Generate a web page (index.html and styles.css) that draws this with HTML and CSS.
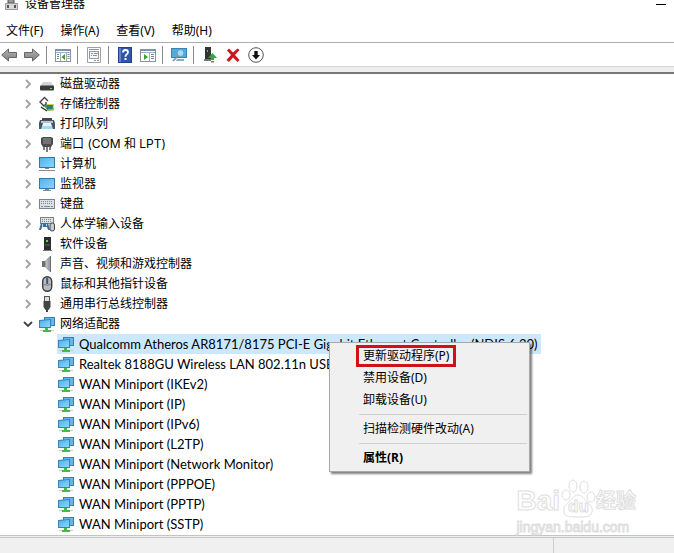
FILE: index.html
```html
<!DOCTYPE html>
<html lang="zh-CN">
<head>
    <meta charset="UTF-8">
    <meta name="viewport" content="width=device-width, initial-scale=1.0">
    <title>设备管理器</title>
    <link rel="stylesheet" href="styles.css">
</head>
<body>
    <!-- Icons -->
    <svg class="symbols" aria-hidden="true">
        <linearGradient id="screenBlue" x1="0" y1="0" x2="1" y2="1">
            <stop offset="0" stop-color="#4fb0ee"/>
            <stop offset="1" stop-color="#8ad8fc"/>
        </linearGradient>
        <linearGradient id="arrowGrey" x1="0" y1="0" x2="0" y2="1">
            <stop offset="0" stop-color="#b5b5b5"/>
            <stop offset="1" stop-color="#7c7c7c"/>
        </linearGradient>
        <symbol id="chevron" viewBox="0 0 10 10">
            <path d="M3 1l4 4-4 4" fill="none" stroke="#a0a0a0" stroke-width="1.8"/>
        </symbol>
        <symbol id="chevronOpen" viewBox="0 0 10 10">
            <path d="M1 3l4 4 4-4" fill="none" stroke="#404040" stroke-width="1.8"/>
        </symbol>
        <symbol id="network" viewBox="0 0 16 16">
            <path d="M5 1h11v9H5z" fill="#3a7fae"/>
            <path d="M6 2h9v7H6z" fill="#63b6ea"/>
            <path d="M0 4l12-1v9H0z" fill="#3a82b6"/>
            <path d="M1 5l10-1v7H1z" fill="url(#screenBlue)"/>
            <path d="M6 12h3v2h3v2H4v-2h2z" fill="#45b84e"/>
            <path d="M1 14h3v1H1zM12 14h3v1h-3z" fill="#c4cfc4"/>
        </symbol>
        <symbol id="disk" viewBox="0 0 16 16">
            <path d="M4 6h8l3 4H1z" fill="#d5d5d5"/>
            <rect x="1" y="9.500" width="14" height="5" rx="1" fill="#3b3b3b"/>
            <rect x="11" y="12" width="2" height="1" fill="#62d672"/>
        </symbol>
        <symbol id="storage" viewBox="0 0 16 16">
            <path d="M9 5L5.500 1.500 1 6l4 4 2-2V6" fill="none" stroke="#444" stroke-width="1.400"/>
            <path d="M5 10l3-2h7v6l-6 1z" fill="#3d9b52"/>
            <path d="M8 9h5v4H8z" fill="#2d7b75"/>
            <path d="M8 8.500h7M9 14h6M14.500 8v5" stroke="#d9cc4a"/>
            <path d="M2 11l6 4" stroke="#333" stroke-width="1.500"/>
        </symbol>
        <symbol id="printer" viewBox="0 0 16 16">
            <rect x="3" y="2" width="10" height="3" fill="#3e4850"/>
            <path d="M1 4h14l1 3v6h-3V9H3v4H0V7z" fill="#4b555e"/>
            <path d="M2 5h12v2H2z" fill="#b9c4cc"/>
            <path d="M4 7h8l2 6H2z" fill="#a5dbf2"/>
            <path d="M4 7h8v3H4z" fill="#e4f5fb"/>
        </symbol>
        <symbol id="port" viewBox="0 0 16 16">
            <path d="M2 2l2-1h8l2 1v6l-2 3H4L2 8z" fill="#4c4c4c"/>
            <path d="M4 3h8M4 5h8M4 7h8" stroke="#9a9a9a"/>
            <path d="M5 11v3M8 11v5M11 11v3" stroke="#555" stroke-width="1.500"/>
        </symbol>
        <symbol id="computer" viewBox="0 0 16 16">
            <rect x="0.500" y="1.500" width="15" height="10" fill="url(#screenBlue)" stroke="#3277a5"/>
            <path d="M6 12h4v1H6z" fill="#789"/>
            <path d="M0 14h16v1H0z" fill="#8c8c8c"/>
        </symbol>
        <symbol id="monitor" viewBox="0 0 16 16">
            <rect x="0.500" y="2.500" width="15" height="10" fill="url(#screenBlue)" stroke="#3277a5"/>
            <path d="M6 13h4v1h2v1H4v-1h2z" fill="#7b8a95"/>
        </symbol>
        <symbol id="keyboard" viewBox="0 0 16 16">
            <rect x="0.500" y="3.500" width="15" height="9" fill="#dbe0e3" stroke="#78838a"/>
            <path d="M2 5.500h12M2 7.500h12" stroke="#7f8a90" stroke-dasharray="1 1"/>
            <path d="M2 10.500h2M5 10.500h6M12 10.500h2" stroke="#7f8a90"/>
        </symbol>
        <symbol id="hid" viewBox="0 0 16 16">
            <rect x="1.500" y="1.500" width="13" height="6" fill="#dbe0e3" stroke="#78838a"/>
            <path d="M3 3.500h10M3 5.500h10" stroke="#7f8a90" stroke-dasharray="1 1"/>
            <path d="M2 7h7l2 7H9l-1-3H3l-1 3H0z" fill="#3f6f91"/>
            <path d="M3 8h1v3H3zM7 8h1v2H7z" fill="#a7d5ef"/>
            <rect x="11" y="7" width="4.500" height="8" rx="2" fill="#ccc" stroke="#3f4548"/>
        </symbol>
        <symbol id="software" viewBox="0 0 16 16">
            <path d="M5 1h7v13H5z" fill="#2c2c2c"/>
            <path d="M7 4h2v2H7z" fill="#4fe04f"/>
            <path d="M6 9h5" stroke="#666"/>
            <path d="M4 14h9v1H4z" fill="#777"/>
        </symbol>
        <symbol id="sound" viewBox="0 0 16 16">
            <path d="M3 5h3v6H3z" fill="#6c7074"/>
            <path d="M6 5l5-5v16l-5-5z" fill="#9da3a8"/>
            <path d="M8 4v8" stroke="#c6cace"/>
            <path d="M11.500 0v16" stroke="#666b6e"/>
        </symbol>
        <symbol id="mouse" viewBox="0 0 16 16">
            <rect x="3.700" y="0.700" width="9" height="14.500" rx="4.500" fill="#b8bcc2" stroke="#363b40" stroke-width="1.400"/>
            <path d="M8.200 2v6" stroke="#3b5878" stroke-width="2"/>
            <path d="M5 8.500q3 1.500 6.500 0" fill="none" stroke="#777"/>
        </symbol>
        <symbol id="usb" viewBox="0 0 16 16">
            <rect x="5.500" y="0.500" width="5" height="5" fill="#ddd" stroke="#555"/>
            <path d="M4.500 5h7v6l-2 3h-3l-2-3z" fill="#444"/>
            <path d="M8 14v2" stroke="#444" stroke-width="2"/>
        </symbol>
        <symbol id="devmgr" viewBox="0 0 16 16">
            <path d="M5 1h6v6H5z" fill="#999" stroke="#555"/>
            <path d="M2.500 7.500h12v6h-12z" fill="#d8d8d8" stroke="#999"/>
            <path d="M4 9h2v3H4zM11 9h2v3h-2z" fill="#555"/>
        </symbol>
        <symbol id="back" viewBox="0 0 16 16">
            <path d="M0.700 8L7.500 2v3.500h8v5h-8V14z" fill="url(#arrowGrey)" stroke="#666"/>
        </symbol>
        <symbol id="forward" viewBox="0 0 16 16">
            <path d="M15.300 8L8.500 2v3.500h-8v5h8V14z" fill="url(#arrowGrey)" stroke="#666"/>
        </symbol>
        <symbol id="paneLeft" viewBox="0 0 16 16">
            <rect x="0.500" y="2.500" width="15" height="12" fill="#fff" stroke="#8a929b"/>
            <path d="M1 3h14v1H1z" fill="#7790ab"/>
            <path d="M1 5.500h14" stroke="#a5adb6"/>
            <path d="M5.500 6v8M11.500 6v8" stroke="#a5adb6"/>
            <path d="M2 7.500h2M2 9.500h2M2 11.500h2M12.500 7.500h2M12.500 9.500h2M12.500 11.500h2" stroke="#6a86a5"/>
            <path d="M10 7v6l-3.500-3z" fill="#35a52c"/>
        </symbol>
        <symbol id="properties" viewBox="0 0 16 16">
            <path d="M1.500 0.500h13v15h-13z" fill="#fff" stroke="#a0a0a0"/>
            <rect x="3.500" y="4.500" width="9" height="7" fill="#f4f6f8" stroke="#999"/>
            <path d="M3 2.500h10M5 6.500h2M8 6.500h4M5 8.500h1M7 8.500h4M8 13.500h2M11 13.500h2" stroke="#8795a5"/>
        </symbol>
        <symbol id="help" viewBox="0 0 16 16">
            <rect x="1.500" y="0.500" width="13" height="15" fill="#2f55ad" stroke="#23408a"/>
            <path d="M2 1h2v14H2z" fill="#6384cc"/>
            <path d="M6 5.500q0-2.500 2.500-2.500T11 5.300q0 1.500-1.500 2.200-1 .6-1 2.200" fill="none" stroke="#fff" stroke-width="1.800"/>
            <path d="M7.500 11h2v2h-2z" fill="#fff"/>
        </symbol>
        <symbol id="paneRight" viewBox="0 0 16 16">
            <rect x="0.500" y="2.500" width="15" height="12" fill="#fff" stroke="#8a929b"/>
            <path d="M1 3h14v1H1z" fill="#7790ab"/>
            <path d="M1 5.500h14M9.500 6v8" stroke="#a5adb6"/>
            <path d="M11 7.500h3M11 9.500h3M11 11.500h3" stroke="#6a86a5"/>
            <path d="M4 7v6l4-3z" fill="#35a52c"/>
        </symbol>
        <symbol id="scan" viewBox="0 0 16 16">
            <rect x="0.500" y="1.500" width="15" height="9" fill="#51abe0" stroke="#3684b4"/>
            <circle cx="9.500" cy="6" r="3.500" fill="#a3daf5" stroke="#6f96ab"/>
            <path d="M7 9l-5 5" stroke="#768b97" stroke-width="1.500"/>
            <path d="M6 12h7v2H5z" fill="#8cabbd"/>
        </symbol>
        <symbol id="update" viewBox="0 0 16 16">
            <path d="M3 0h6v12H3z" fill="#303432"/>
            <path d="M5 3h1v2H5z" fill="#52cc5c"/>
            <path d="M2 12h7v2H2z" fill="#737873"/>
            <path d="M10.500 6l4.500 5h-3v2H9v-2H6zM9 14h3v1.500H9z" fill="#2fa83f"/>
        </symbol>
        <symbol id="remove" viewBox="0 0 16 16">
            <path d="M2 3.500L4 1.500l4 4 4.500-4 2 1.500-4.500 5 4.500 5-2 2L8 10.500l-4 4.500-2.500-2L6 8z" fill="#cf141c"/>
        </symbol>
        <symbol id="disable" viewBox="0 0 16 16">
            <circle cx="8" cy="8" r="7.300" fill="#fff" stroke="#555"/>
            <path d="M6.300 4h3.400v4H12l-4 4.500L4 8h2.300z" fill="#111"/>
        </symbol>
    </svg>

    <div class="window">
        <header class="titleBar">
            <svg class="icon"><use href="#devmgr"/></svg>
            <h1 class="title">设备管理器</h1>
            <button class="minimize" aria-label="最小化"></button>
        </header>

        <nav class="menuBar">
            <button>文件(F)</button>
            <button>操作(A)</button>
            <button>查看(V)</button>
            <button>帮助(H)</button>
        </nav>

        <div class="toolBar">
            <button aria-label="后退"><svg class="icon"><use href="#back"/></svg></button>
            <button aria-label="前进"><svg class="icon"><use href="#forward"/></svg></button>
            <span class="divider"></span>
            <button aria-label="控制台树"><svg class="icon"><use href="#paneLeft"/></svg></button>
            <span class="divider"></span>
            <button aria-label="属性"><svg class="icon"><use href="#properties"/></svg></button>
            <span class="divider"></span>
            <button aria-label="帮助"><svg class="icon"><use href="#help"/></svg></button>
            <button aria-label="操作窗格"><svg class="icon"><use href="#paneRight"/></svg></button>
            <span class="divider"></span>
            <button aria-label="扫描"><svg class="icon"><use href="#scan"/></svg></button>
            <span class="divider"></span>
            <button aria-label="更新"><svg class="icon"><use href="#update"/></svg></button>
            <button aria-label="卸载"><svg class="icon"><use href="#remove"/></svg></button>
            <button aria-label="禁用"><svg class="icon"><use href="#disable"/></svg></button>
        </div>
        <div class="edge"></div>

        <main class="content">
            <ul class="tree">
                <li class="node"><button class="toggle" aria-label="展开"><svg><use href="#chevron"/></svg></button><svg class="icon"><use href="#disk"/></svg><span>磁盘驱动器</span></li>
                <li class="node"><button class="toggle" aria-label="展开"><svg><use href="#chevron"/></svg></button><svg class="icon"><use href="#storage"/></svg><span>存储控制器</span></li>
                <li class="node"><button class="toggle" aria-label="展开"><svg><use href="#chevron"/></svg></button><svg class="icon"><use href="#printer"/></svg><span>打印队列</span></li>
                <li class="node"><button class="toggle" aria-label="展开"><svg><use href="#chevron"/></svg></button><svg class="icon"><use href="#port"/></svg><span>端口 (COM 和 LPT)</span></li>
                <li class="node"><button class="toggle" aria-label="展开"><svg><use href="#chevron"/></svg></button><svg class="icon"><use href="#computer"/></svg><span>计算机</span></li>
                <li class="node"><button class="toggle" aria-label="展开"><svg><use href="#chevron"/></svg></button><svg class="icon"><use href="#monitor"/></svg><span>监视器</span></li>
                <li class="node"><button class="toggle" aria-label="展开"><svg><use href="#chevron"/></svg></button><svg class="icon"><use href="#keyboard"/></svg><span>键盘</span></li>
                <li class="node"><button class="toggle" aria-label="展开"><svg><use href="#chevron"/></svg></button><svg class="icon"><use href="#hid"/></svg><span>人体学输入设备</span></li>
                <li class="node"><button class="toggle" aria-label="展开"><svg><use href="#chevron"/></svg></button><svg class="icon"><use href="#software"/></svg><span>软件设备</span></li>
                <li class="node"><button class="toggle" aria-label="展开"><svg><use href="#chevron"/></svg></button><svg class="icon"><use href="#sound"/></svg><span>声音、视频和游戏控制器</span></li>
                <li class="node"><button class="toggle" aria-label="展开"><svg><use href="#chevron"/></svg></button><svg class="icon"><use href="#mouse"/></svg><span>鼠标和其他指针设备</span></li>
                <li class="node"><button class="toggle" aria-label="展开"><svg><use href="#chevron"/></svg></button><svg class="icon"><use href="#usb"/></svg><span>通用串行总线控制器</span></li>
                <li class="node"><button class="toggle" aria-label="折叠"><svg><use href="#chevronOpen"/></svg></button><svg class="icon"><use href="#network"/></svg><span>网络适配器</span></li>
            </ul>
            <ul class="devices">
                <li class="device selected"><svg class="icon"><use href="#network"/></svg><span>Qualcomm Atheros AR8171/8175 PCI-E Gigabit Ethernet Controller (NDIS 6.30)</span></li>
                <li class="device"><svg class="icon"><use href="#network"/></svg><span>Realtek 8188GU Wireless LAN 802.11n USB</span></li>
                <li class="device"><svg class="icon"><use href="#network"/></svg><span>WAN Miniport (IKEv2)</span></li>
                <li class="device"><svg class="icon"><use href="#network"/></svg><span>WAN Miniport (IP)</span></li>
                <li class="device"><svg class="icon"><use href="#network"/></svg><span>WAN Miniport (IPv6)</span></li>
                <li class="device"><svg class="icon"><use href="#network"/></svg><span>WAN Miniport (L2TP)</span></li>
                <li class="device"><svg class="icon"><use href="#network"/></svg><span>WAN Miniport (Network Monitor)</span></li>
                <li class="device"><svg class="icon"><use href="#network"/></svg><span>WAN Miniport (PPPOE)</span></li>
                <li class="device"><svg class="icon"><use href="#network"/></svg><span>WAN Miniport (PPTP)</span></li>
                <li class="device"><svg class="icon"><use href="#network"/></svg><span>WAN Miniport (SSTP)</span></li>
            </ul>

            <div class="contextMenu">
                <button class="marked">更新驱动程序(P)</button>
                <button>禁用设备(D)</button>
                <button>卸载设备(U)</button>
                <hr>
                <button>扫描检测硬件改动(A)</button>
                <hr>
                <button class="default">属性(R)</button>
            </div>

            <div class="watermark">
                <div class="brand">
                    <span>Bai</span>
                    <span class="paw">
                        <svg viewBox="0 0 36 40">
                            <ellipse cx="6" cy="16" rx="4" ry="5"/>
                            <ellipse cx="13" cy="7" rx="4" ry="6"/>
                            <ellipse cx="24" cy="8" rx="4" ry="6"/>
                            <ellipse cx="31" cy="18" rx="4" ry="5"/>
                            <path d="M18 16c4 0 6 4 9 7 4 3 6 6 5 10-1 5-6 5-14 5S5 38 4 33c-1-4 1-7 5-10 3-3 5-7 9-7z"/>
                        </svg>
                        <span class="du">du</span>
                    </span>
                    <span class="cn">经验</span>
                </div>
                <div class="site">jingyan.baidu.com</div>
            </div>
        </main>

        <footer class="statusBar">
            <span class="status"></span>
            <span class="status"></span>
        </footer>
    </div>
</body>
</html>
```
FILE: styles.css
```css
* {
  box-sizing: border-box;
}

body {
  margin: 0;
  background: #fff;
  color: #000;
  font-family: "Noto Sans", "Noto Sans CJK SC", sans-serif;
  font-size: 12px;
  line-height: 20px;
}

button {
  padding: 0;
  border: none;
  background: none;
  color: inherit;
  font: inherit;
}

ul {
  margin: 0;
  padding: 0;
  list-style: none;
}

.symbols {
  position: absolute;
  width: 0;
  height: 0;
}

.window {
  display: flex;
  flex-direction: column;
  min-height: 100vh;
  overflow: hidden;
}

.icon {
  flex: none;
  width: 16px;
  height: 16px;
}

/* Title, menu and tool bars */
.titleBar {
  display: flex;
  align-items: center;
  gap: 6px;
  height: 20px;
  margin-top: -6px;
  padding: 0 8px 0 3px;
}

.title {
  flex: 1;
  margin: 0;
  font-size: 12px;
  font-weight: normal;
}

.minimize {
  width: 10px;
  height: 1px;
  background: #000;
}

.menuBar {
  display: flex;
  gap: 17px;
  height: 28px;
  padding: 6px 6px 0;
}

.toolBar {
  display: flex;
  align-items: center;
  gap: 5px;
  height: 24px;
  border-top: 1px solid #adadad;
}

.toolBar button {
  display: flex;
  justify-content: center;
  width: 18px;
}

.divider {
  width: 1px;
  height: 18px;
  margin-right: 2px;
  background: #8c8c8c;
}

.edge {
  height: 8px;
  border-top: 1px solid #d5d5d5;
  border-bottom: 2px solid #777;
  background: #eee;
}

/* Device tree */
.content {
  flex: 1;
  position: relative;
}

.tree {
  font-family: Inter, "Noto Sans CJK SC", sans-serif;
}

.node {
  display: flex;
  align-items: center;
  height: 20px;
  padding-left: 23px;
  white-space: nowrap;
}

.node .icon {
  margin: 0 5px 0 6px;
}

.toggle {
  display: flex;
  width: 10px;
}

.toggle svg {
  width: 10px;
  height: 10px;
}

.devices {
  display: flex;
  flex-direction: column;
  align-items: flex-start;
  padding: 0 0 1px 57px;
  font-family: Lato, "Noto Sans CJK SC", sans-serif;
  font-size: 13px;
}

.device {
  display: flex;
  align-items: center;
  gap: 5px;
  height: 20px;
  padding: 0 4px 0 1px;
  white-space: nowrap;
}

.selected {
  background: #cce8ff;
}

.contextMenu {
  position: absolute;
  left: 329px;
  top: 268px;
  display: flex;
  flex-direction: column;
  width: 201px;
  padding: 2px;
  border: 1px solid #a8a8a8;
  background: #f0f0f0;
  box-shadow: 2px 2px 2px rgba(0, 0, 0, 0.5);
}

.contextMenu button {
  height: 22px;
  padding-left: 31px;
  text-align: left;
}

.contextMenu .marked {
  align-self: flex-start;
  margin-left: 24px;
  padding: 0 4px;
  border: 3px solid #d0101a;
  line-height: 16px;
}

.contextMenu .default {
  font-weight: bold;
}

.contextMenu hr {
  width: 168px;
  height: 1px;
  margin: 3px 0 3px auto;
  border: none;
  background: #cfcfcf;
}

/* Watermark over the lower right corner */
.watermark {
  position: absolute;
  right: 38px;
  bottom: 0;
  color: #fff;
  font-family: "Liberation Sans", "Noto Sans CJK SC", sans-serif;
  font-weight: bold;
  -webkit-text-stroke: 1px #dedede;
}

.brand {
  display: flex;
  align-items: flex-end;
  height: 40px;
  font-size: 28px;
  line-height: 36px;
}

.paw {
  position: relative;
  width: 36px;
  height: 40px;
}

.paw svg {
  width: 36px;
  height: 40px;
  fill: #fff;
  stroke: #dedede;
}

.du {
  position: absolute;
  left: 8px;
  top: 18px;
  font-size: 17px;
  line-height: 20px;
}

.cn {
  font-size: 20px;
}

.site {
  font-size: 14px;
  font-weight: normal;
  line-height: 16px;
}

.statusBar {
  display: flex;
  height: 18px;
  border-top: 3px double #c4c4c4;
  background: #f0f0f0;
}

.status {
  flex: 1;
}

.status:first-child {
  flex: none;
  width: 82.2%;
  border-right: 1px solid #cfcfcf;
}
```
